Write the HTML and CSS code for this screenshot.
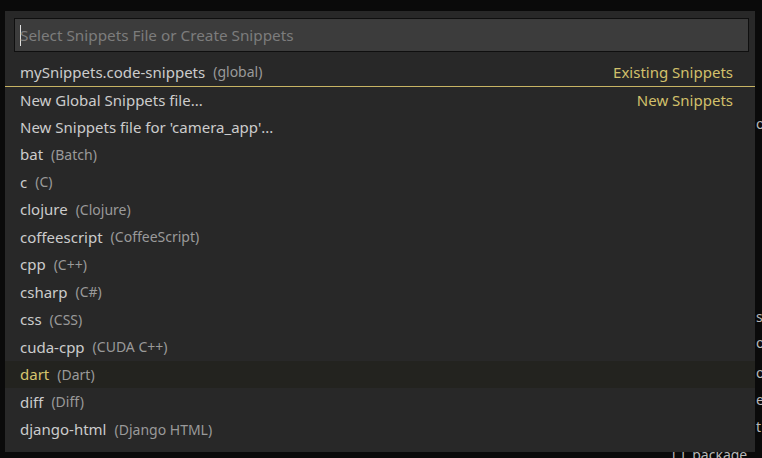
FILE: index.html
```
<!DOCTYPE html>
<html>
<head>
<meta charset="utf-8">
<link rel="stylesheet" href="styles.css">
</head>
<body>
<div class="editor-bg">
  <span class="bg-glyph g1">o</span>
  <span class="bg-glyph g2">s</span>
  <span class="bg-glyph g3">o</span>
  <span class="bg-glyph g4">o</span>
  <span class="bg-glyph g5">e</span>
  <span class="bg-glyph g6">t</span>
  <span class="bg-glyph g7">[ ] .package</span>
</div>
<div class="quick-pick">
  <div class="input-box">
    <span class="caret"></span>
    <span class="placeholder">Select Snippets File or Create Snippets</span>
  </div>
  <div class="list">
    <div class="row"><span class="label">mySnippets.code-snippets</span><span class="desc">(global)</span><span class="group">Existing Snippets</span></div>
    <div class="row sep"><span class="label">New Global Snippets file...</span><span class="group">New Snippets</span></div>
    <div class="row"><span class="label">New Snippets file for 'camera_app'...</span></div>
    <div class="row"><span class="label">bat</span><span class="desc">(Batch)</span></div>
    <div class="row"><span class="label">c</span><span class="desc">(C)</span></div>
    <div class="row"><span class="label">clojure</span><span class="desc">(Clojure)</span></div>
    <div class="row"><span class="label">coffeescript</span><span class="desc">(CoffeeScript)</span></div>
    <div class="row"><span class="label">cpp</span><span class="desc">(C++)</span></div>
    <div class="row"><span class="label">csharp</span><span class="desc">(C#)</span></div>
    <div class="row"><span class="label">css</span><span class="desc">(CSS)</span></div>
    <div class="row"><span class="label">cuda-cpp</span><span class="desc">(CUDA C++)</span></div>
    <div class="row focused"><span class="label">dart</span><span class="desc">(Dart)</span></div>
    <div class="row"><span class="label">diff</span><span class="desc">(Diff)</span></div>
    <div class="row"><span class="label">django-html</span><span class="desc">(Django HTML)</span></div>
  </div>
</div>
</body>
</html>
```
FILE: styles.css
```
html, body {
  margin: 0;
  padding: 0;
  width: 762px;
  height: 458px;
  overflow: hidden;
  background: #0a0a0a;
  font-family: "Noto Sans", "Open Sans", sans-serif;
}
body {
  position: relative;
  padding: 11px 0 0 5px;
  box-sizing: border-box;
}
.editor-bg {
  position: absolute;
  inset: 0;
  color: #b8b8b8;
  font-size: 14px;
}
.bg-glyph { position: absolute; line-height: 14px; }
.g1 { left: 756px; top: 117px; }
.g2 { left: 756px; top: 310px; }
.g3 { left: 756px; top: 336px; }
.g4 { left: 756px; top: 366px; }
.g5 { left: 756px; top: 393px; }
.g6 { left: 756px; top: 420px; }
.g7 { left: 672px; top: 448px; }
.quick-pick {
  position: relative;
  width: 750px;
  height: 441px;
  background: #282828;
  padding: 7px 6px 0 9px;
  box-sizing: border-box;
}
.input-box {
  height: 34px;
  box-sizing: border-box;
  background: #3c3c3c;
  border: 1px solid #0f0f0f;
  display: flex;
  align-items: center;
  padding-left: 5px;
  font-size: 15.3px;
}
.caret {
  width: 1px;
  height: 21px;
  background: #e0e0e0;
}
.placeholder {
  color: #7c7c7c;
  margin-left: -1px;
}
.list {
  margin: 6px -6px 0 -9px;
}
.row {
  height: 27.5px;
  display: flex;
  align-items: center;
  padding: 0 22px 0 15px;
  box-sizing: border-box;
  font-size: 15px;
  color: #cccccc;
}
.row.sep {
  border-top: 1px solid #c8b464;
}
.row.focused {
  background: #23231f;
}
.row.focused .label { color: #d6c56e; }
.desc {
  margin-left: 8px;
  font-size: 14px;
  color: #9a9a9a;
}
.group {
  margin-left: auto;
  color: #d2c06b;
}
```
